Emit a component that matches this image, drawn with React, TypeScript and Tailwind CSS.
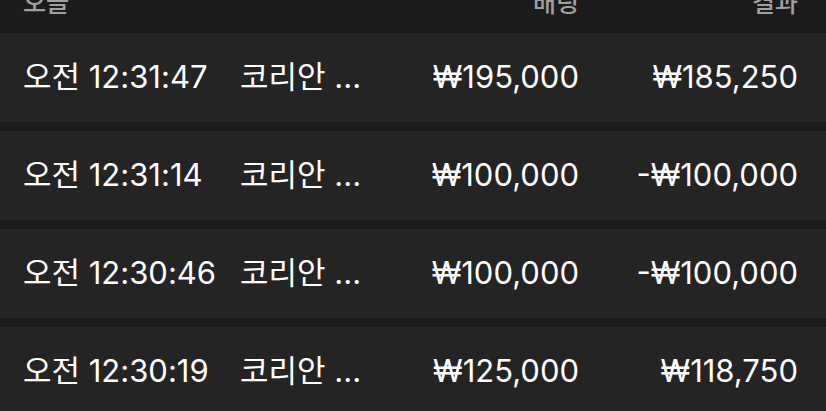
import React from 'react';

type Bet = {
  time: string;
  game: string;
  stake: string;
  result: string;
};

const bets: Bet[] = [
  { time: '오전 12:31:47', game: '코리안 ...', stake: '₩195,000', result: '₩185,250' },
  { time: '오전 12:31:14', game: '코리안 ...', stake: '₩100,000', result: '-₩100,000' },
  { time: '오전 12:30:46', game: '코리안 ...', stake: '₩100,000', result: '-₩100,000' },
  { time: '오전 12:30:19', game: '코리안 ...', stake: '₩125,000', result: '₩118,750' },
];

const cols = 'grid grid-cols-[217px_1fr_auto_219px] pl-[23px] pr-[28px]';

const App: React.FC = () => {
  return (
    <div className="h-[411px] w-[826px] overflow-hidden bg-[#1b1b1b] font-['Inter','Noto_Sans_CJK_KR',sans-serif] text-[31px] text-white">
      {/* header is scrolled up, only the bottom of the labels shows */}
      <div className={`${cols} h-[33px] overflow-hidden items-start text-[25px] font-medium text-[#a0a0a0]`}>
        <span className="leading-none -mt-[9px]">오늘</span>
        <span />
        <span className="leading-none -mt-[9px] text-right">배팅</span>
        <span className="leading-none -mt-[9px] text-right">결과</span>
      </div>

      <div className="flex flex-col gap-[9px]">
        {bets.map((b, i) => (
          <div key={i} className={`${cols} items-center h-[89px] shrink-0 bg-[#242424]`}>
            <span className="whitespace-nowrap">{b.time}</span>
            <span className="whitespace-nowrap">{b.game}</span>
            <span className="text-right">{b.stake}</span>
            <span className="text-right">{b.result}</span>
          </div>
        ))}
      </div>
    </div>
  );
};

export default App;
